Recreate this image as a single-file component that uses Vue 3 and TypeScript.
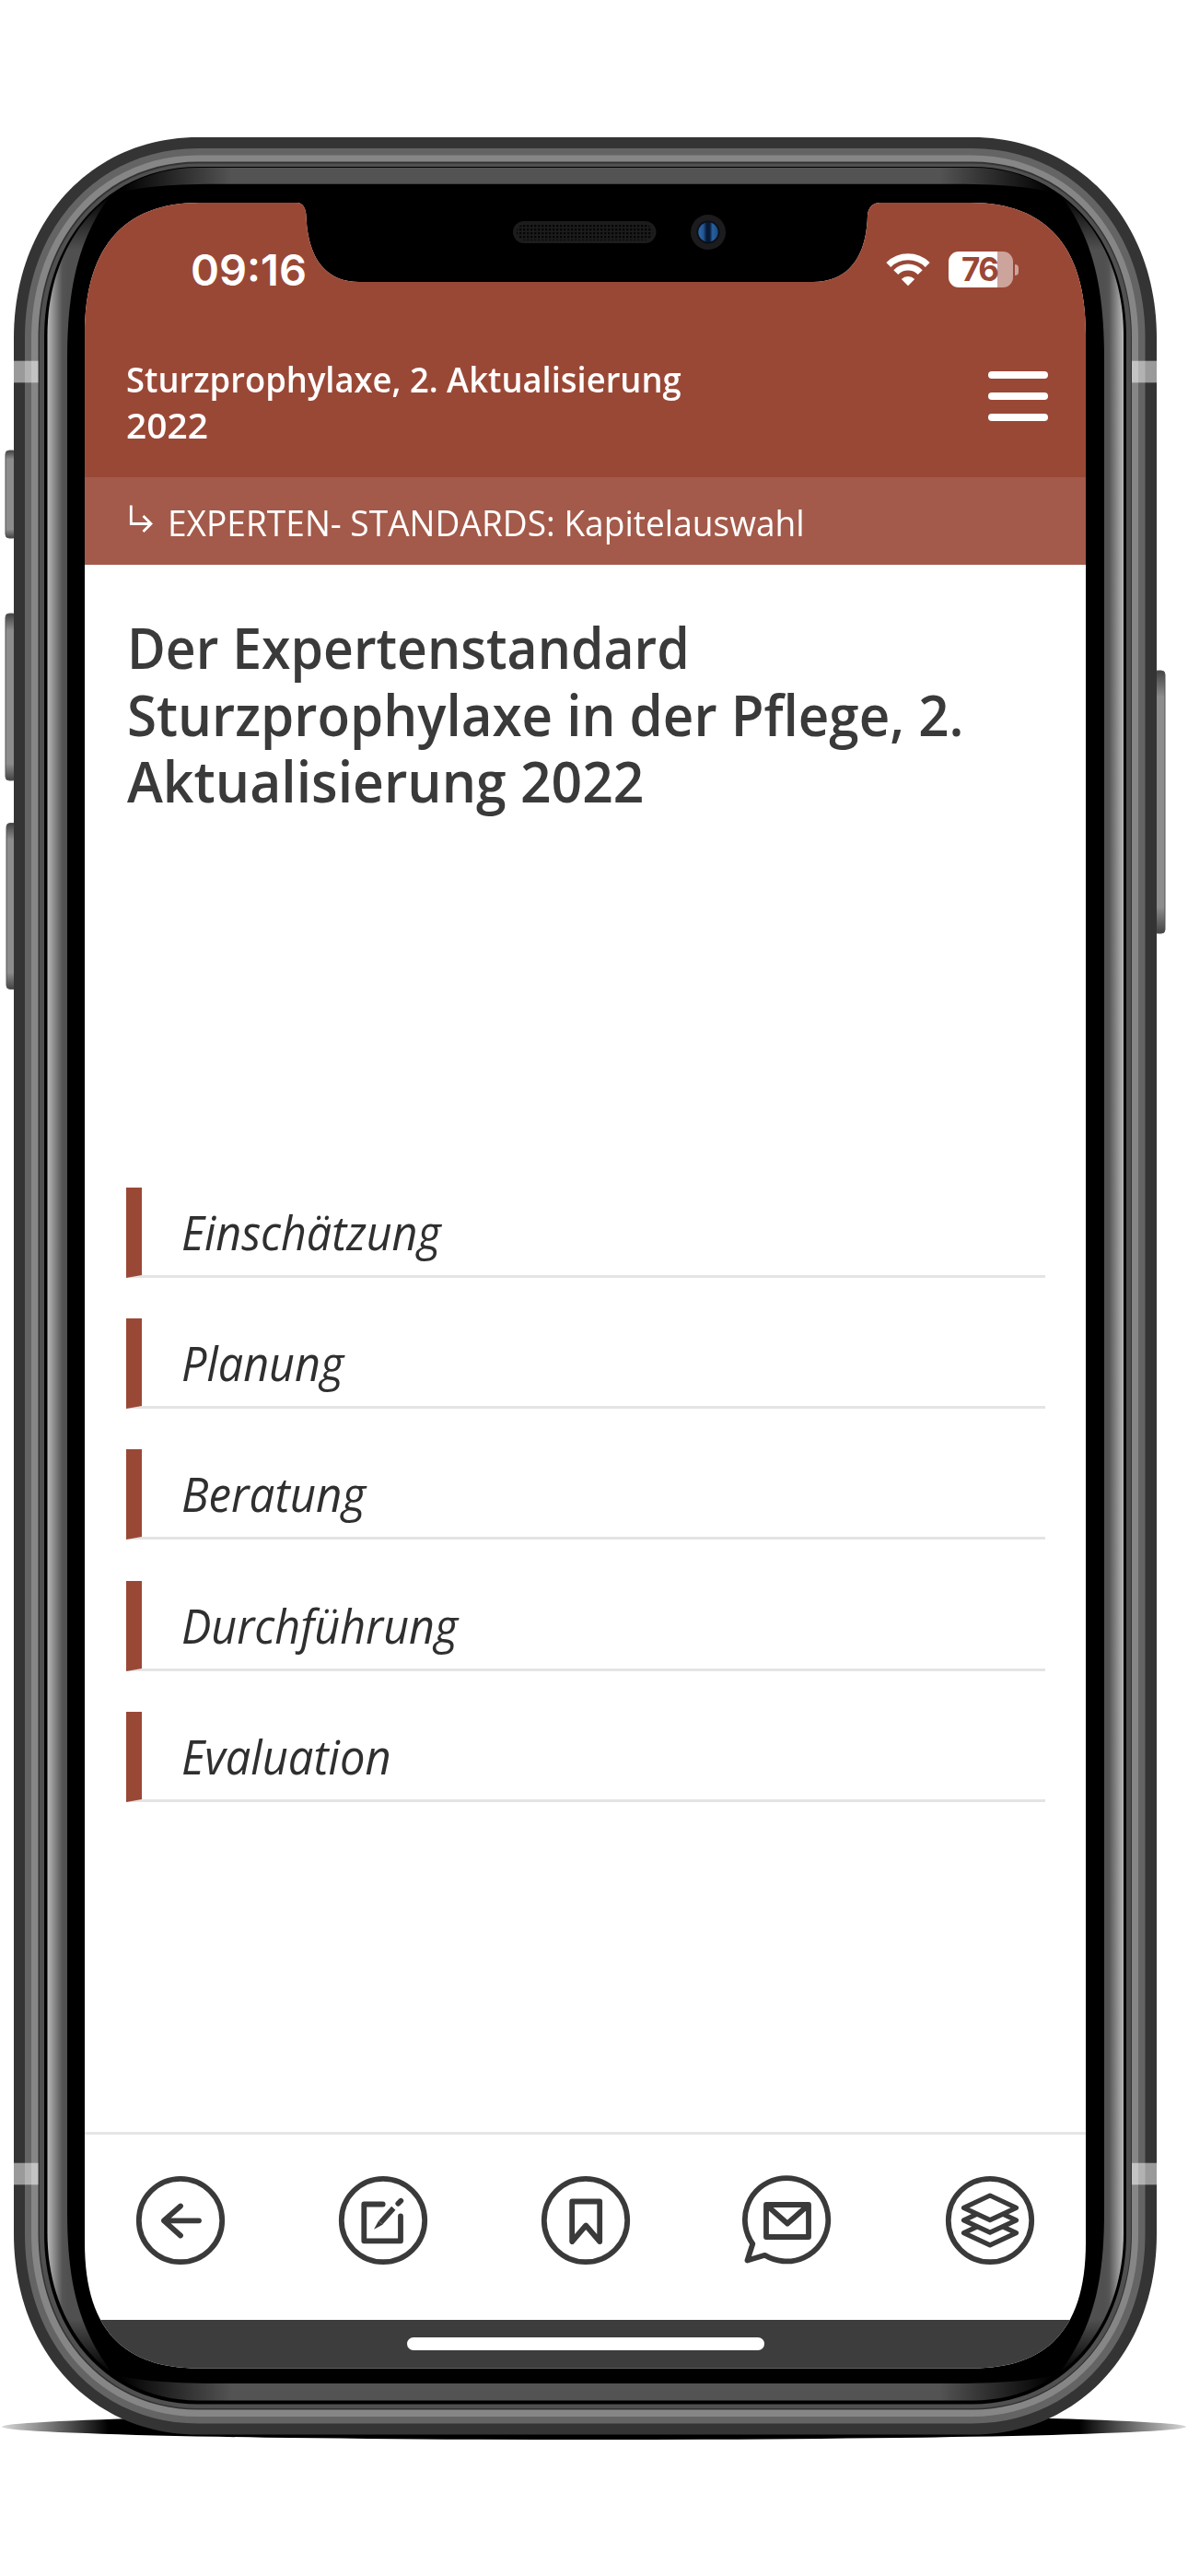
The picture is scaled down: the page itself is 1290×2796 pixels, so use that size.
<script setup lang="ts">
interface FittedLine {
  text: string
  width: number
}

const titleLines: FittedLine[] = [
  { text: 'Sturzprophylaxe, 2. Aktualisierung', width: 603 },
  { text: '2022', width: 89 },
]

const breadcrumb: FittedLine = { text: 'EXPERTEN- STANDARDS: Kapitelauswahl', width: 692 }

const headingLines: FittedLine[] = [
  { text: 'Der Expertenstandard', width: 611 },
  { text: 'Sturzprophylaxe in der Pflege, 2.', width: 908 },
  { text: 'Aktualisierung 2022', width: 561 },
]

const chapters: FittedLine[] = [
  { text: 'Einschätzung', width: 282 },
  { text: 'Planung', width: 176 },
  { text: 'Beratung', width: 200 },
  { text: 'Durchführung', width: 300 },
  { text: 'Evaluation', width: 228 },
]

// Condenses a line horizontally until it takes up the given width.
const vFit = {
  mounted(el: HTMLElement, binding: { value: number }) {
    el.style.transform = `scaleX(${binding.value / el.offsetWidth})`
  },
}

// Rounded rectangle with continuous corners, inset from the outer edge of the case.
function ring(x0: number, y0: number, x1: number, y1: number): string {
  const k = 0.42
  const rx = 200 - (x0 - 15)
  const ry = 218 - (x0 - 15)
  const a = rx * k
  const b = ry * k
  return [
    `M${x0} ${y0 + ry}`,
    `C${x0} ${y0 + b} ${x0 + a} ${y0} ${x0 + rx} ${y0}`,
    `H${x1 - rx}`,
    `C${x1 - a} ${y0} ${x1} ${y0 + b} ${x1} ${y0 + ry}`,
    `V${y1 - ry}`,
    `C${x1} ${y1 - b} ${x1 - a} ${y1} ${x1 - rx} ${y1}`,
    `H${x0 + rx}`,
    `C${x0 + a} ${y1} ${x0} ${y1 - b} ${x0} ${y1 - ry}`,
    'Z',
  ].join(' ')
}

const rings = [
  { d: ring(15, 149, 1256, 2642.5), fill: '#343434' },
  { d: ring(27, 161, 1243.5, 2630.5), fill: '#646464' },
  { d: ring(34, 168.5, 1236, 2623), fill: '#868686' },
  { d: ring(41.5, 175.5, 1229, 2615.5), fill: '#333333' },
  { d: ring(43, 177.5, 1228, 2614), fill: '#505050' },
  { d: ring(48, 181, 1223, 2609.5), fill: '#000000' },
]
const bezel = ring(51.5, 182, 1220, 2605.5)

const glass =
  'M73 390 C73 310 86 258 120 212 C140 204 180 199.7 235 199.7 H1037 C1092 199.7 1132 204 1152 212 ' +
  'C1186 258 1199 310 1199 390 V2400 C1199 2480 1186 2528 1150 2576 C1130 2583 1092 2587 1037 2587 ' +
  'H235 C180 2587 140 2583 122 2576 C86 2528 73 2480 73 2400 Z'

const sideButtons = [
  { x: 6, y: 489, w: 12, h: 95 },
  { x: 6, y: 666, w: 12, h: 181 },
  { x: 7, y: 893.5, w: 12, h: 180 },
  { x: 1253, y: 728, w: 12, h: 285 },
]
</script>

<template>
  <div class="stage">
    <svg class="case" viewBox="0 0 1290 2796" width="1290" height="2796" aria-hidden="true">
      <defs>
        <linearGradient id="floor">
          <stop offset="0" stop-color="#000" stop-opacity="0.15" />
          <stop offset="0.09" stop-color="#000" />
          <stop offset="0.91" stop-color="#000" />
          <stop offset="1" stop-color="#000" stop-opacity="0.15" />
        </linearGradient>
        <linearGradient id="edgeX" gradientUnits="userSpaceOnUse" x1="130" y1="0" x2="1142" y2="0">
          <stop offset="0" stop-color="#000" />
          <stop offset="0.12" stop-color="#535353" />
          <stop offset="0.88" stop-color="#535353" />
          <stop offset="1" stop-color="#000" />
        </linearGradient>
        <linearGradient id="edgeL" gradientUnits="userSpaceOnUse" x1="51.5" y1="0" x2="73" y2="0">
          <stop offset="0" stop-color="#b8b8b8" />
          <stop offset="0.75" stop-color="#555" />
          <stop offset="1" stop-color="#505050" />
        </linearGradient>
        <linearGradient id="edgeR" gradientUnits="userSpaceOnUse" x1="1220" y1="0" x2="1199" y2="0">
          <stop offset="0" stop-color="#b8b8b8" />
          <stop offset="0.75" stop-color="#555" />
          <stop offset="1" stop-color="#505050" />
        </linearGradient>
        <linearGradient id="fadeY" gradientUnits="userSpaceOnUse" x1="0" y1="212" x2="0" y2="2576">
          <stop offset="0" stop-color="#000" />
          <stop offset="0.025" stop-color="#fff" />
          <stop offset="0.975" stop-color="#fff" />
          <stop offset="1" stop-color="#000" />
        </linearGradient>
        <linearGradient id="button" x1="0" y1="0" x2="0" y2="1">
          <stop offset="0" stop-color="#444" />
          <stop offset="0.1" stop-color="#8d8d8d" />
          <stop offset="0.9" stop-color="#8d8d8d" />
          <stop offset="1" stop-color="#444" />
        </linearGradient>
        <mask id="sides" maskUnits="userSpaceOnUse" x="0" y="0" width="1290" height="2796">
          <rect x="0" y="212" width="1290" height="2364" fill="url(#fadeY)" />
        </mask>
        <clipPath id="bezelClip"><path :d="bezel" /></clipPath>
        <pattern id="mesh" width="4" height="4" patternUnits="userSpaceOnUse">
          <rect width="4" height="4" fill="#1c1c1d" />
          <rect width="2.4" height="2.4" fill="#060606" />
        </pattern>
        <linearGradient id="lens">
          <stop offset="0" stop-color="#2d69ad" />
          <stop offset="0.25" stop-color="#235795" />
          <stop offset="0.42" stop-color="#081933" />
          <stop offset="0.58" stop-color="#081933" />
          <stop offset="0.72" stop-color="#2860a0" />
          <stop offset="1" stop-color="#1d4a80" />
        </linearGradient>
      </defs>

      <ellipse cx="645" cy="2634" rx="643" ry="14" fill="url(#floor)" />

      <rect
        v-for="b in sideButtons"
        :key="b.y"
        :x="b.x"
        :y="b.y"
        :width="b.w"
        :height="b.h"
        rx="4"
        fill="url(#button)"
        stroke="#555"
        stroke-width="1"
      />
      <path v-for="r in rings" :key="r.d" :d="r.d" :fill="r.fill" />

      <g clip-path="url(#bezelClip)">
        <rect x="120" y="182" width="1032" height="31" fill="url(#edgeX)" />
        <rect x="120" y="2575" width="1032" height="31" fill="url(#edgeX)" />
        <g mask="url(#sides)">
          <rect x="51" y="212" width="71" height="2364" fill="url(#edgeL)" />
          <rect x="1150" y="212" width="71" height="2364" fill="url(#edgeR)" />
        </g>
        <path :d="glass" fill="#000" />
      </g>

      <g fill="#fff" fill-opacity="0.5">
        <rect x="15" y="391.7" width="26.5" height="23.6" />
        <rect x="1229" y="391.7" width="27" height="23.6" />
        <rect x="15" y="2347.7" width="26.5" height="23.6" />
        <rect x="1229" y="2347.7" width="27" height="23.6" />
      </g>

      <rect x="557" y="240" width="155.5" height="24" rx="12" fill="#1c1c1d" />
      <rect x="561" y="243" width="147.5" height="18" rx="9" fill="url(#mesh)" />
      <circle cx="769" cy="252" r="19" fill="#1c1c1e" />
      <circle cx="769" cy="252" r="12.5" fill="#0b0f18" />
      <circle cx="769" cy="252" r="10.7" fill="url(#lens)" />
    </svg>

    <div class="screen">
      <div class="status">
        <span class="time">09:16</span>
        <div class="indicators">
          <svg class="wifi" viewBox="0 0 48 36" width="48" height="36" aria-hidden="true">
            <g fill="none" stroke="#fff" stroke-width="7">
              <path d="M2.8 12.4 A30.2 30.2 0 0 1 45.2 12.4" />
              <path d="M10.8 20.6 A18.6 18.6 0 0 1 37.2 20.6" />
            </g>
            <path d="M24 35.3 L16.8 28 A10.2 10.2 0 0 1 31.2 28 Z" fill="#fff" />
          </svg>
          <div class="battery"><span class="level">76</span></div>
          <i class="nub"></i>
        </div>
      </div>

      <header class="header">
        <div class="title">
          <div v-for="line in titleLines" :key="line.text" class="line">
            <span v-fit="line.width" class="fit">{{ line.text }}</span>
          </div>
        </div>
        <div class="menu"><i></i><i></i><i></i></div>
      </header>

      <nav class="crumb">
        <svg viewBox="0 0 28 34" width="28" height="34" aria-hidden="true">
          <path d="M2.3 1.5 V21.5 H24 M15.5 13 L24 21.5 L15.5 30" fill="none" stroke="#fff" stroke-width="2.8" />
        </svg>
        <span v-fit="breadcrumb.width" class="fit">{{ breadcrumb.text }}</span>
      </nav>

      <main class="content">
        <h1 class="heading">
          <span v-for="line in headingLines" :key="line.text" class="line">
            <span v-fit="line.width" class="fit">{{ line.text }}</span>
          </span>
        </h1>
        <ul class="chapters">
          <li v-for="chapter in chapters" :key="chapter.text" class="chapter">
            <span v-fit="chapter.width" class="fit">{{ chapter.text }}</span>
          </li>
        </ul>
      </main>

      <footer class="tabs">
        <svg class="icon" viewBox="0 0 100 100" aria-hidden="true">
          <circle cx="50" cy="50" r="45.2" />
          <path d="M70 50.3 H32 M50 34.5 L32 50.3 L50 66.5" />
        </svg>
        <svg class="icon" viewBox="0 0 100 100" aria-hidden="true">
          <circle cx="50" cy="50" r="45.2" />
          <path d="M49.7 32.5 H29.3 V72.3 H69 V45.5" />
          <path d="M61.3 36.8 L47.5 52.2" stroke-linecap="butt" />
          <path d="M66.3 31.8 L69.3 28.8" />
          <path d="M45.2 50.2 L49.8 54.5 L40 59.8 Z" class="tip" />
        </svg>
        <svg class="icon" viewBox="0 0 100 100" aria-hidden="true">
          <circle cx="50" cy="50" r="45.2" />
          <path d="M35.2 29.5 H65.2 V73 L50.2 55.5 L35.2 73 Z" />
        </svg>
        <svg class="icon" viewBox="0 0 100 100" aria-hidden="true">
          <path d="M25.5 87.8 A45.2 45.2 0 1 0 12.3 75.5 L6.5 93.5 Z" />
          <path d="M27 33 H73 V68 H27 Z M28 34 L50 53.5 L72 34" />
        </svg>
        <svg class="icon layers" viewBox="0 0 100 100" aria-hidden="true">
          <circle cx="50" cy="50" r="45.2" />
          <path d="M50 50.3 L78.5 63.6 L50 76.9 L21.5 63.6 Z" />
          <path d="M50 36.6 L78.5 49.9 L50 63.2 L21.5 49.9 Z" />
          <path d="M50 23 L78.5 36.3 L50 49.6 L21.5 36.3 Z" />
        </svg>
      </footer>

      <div class="home"><i></i></div>
    </div>
  </div>
</template>

<style>
body {
  background: #fff;
}
</style>

<style scoped>
.stage {
  position: relative;
  box-sizing: border-box;
  width: 1290px;
  height: 2796px;
  padding: 220px 0 0 92px;
  overflow: hidden;
  font-family: "Open Sans", "Noto Sans", sans-serif;
}

.case {
  position: absolute;
  inset: 0;
}

.screen {
  position: relative;
  display: flex;
  flex-direction: column;
  width: 1087px;
  height: 2350.5px;
  background: #fff;
  color: #3a3a3a;
  clip-path: path("M0 143 C0 52 39 0 125 0 H230 C237 0 240 6 240.5 14 C242 58 260 86 298 86 H791 C831 86 849 56 850 14 C850.5 6 855 0 864 0 H962 C1048 0 1087 52 1087 143 V2214 C1087 2304 1049 2350.5 964 2350.5 H123 C38 2350.5 0 2304 0 2214 Z");
}

.status {
  display: flex;
  justify-content: space-between;
  box-sizing: border-box;
  height: 140px;
  padding: 48px 73px 0 115px;
  background: #9a4836;
  color: #fff;
  font-family: Inter, sans-serif;
}

.time {
  font-size: 47px;
  font-weight: 600;
  line-height: 50px;
}

.indicators {
  display: flex;
  align-items: flex-start;
}

.wifi {
  margin: 7px 19.5px 0 0;
}

.battery {
  width: 70.5px;
  height: 38.5px;
  margin-top: 5px;
  border-radius: 11px;
  background: linear-gradient(90deg, #fff 53.5px, #cca49b 53.5px);
  color: #9a4836;
  text-align: center;
}

.level {
  display: block;
  padding-right: 2px;
  font-size: 35px;
  font-weight: 700;
  line-height: 39px;
  letter-spacing: -1.5px;
}

.nub {
  width: 4px;
  height: 12px;
  margin: 18.5px 0 0 2px;
  border-radius: 0 4px 4px 0;
  background: #cca49b;
}

.header {
  display: flex;
  justify-content: space-between;
  box-sizing: border-box;
  height: 158px;
  padding: 26px 41px 0 45px;
  background: #9a4836;
  color: #fff;
}

.title {
  font-size: 38px;
  font-weight: 560;
  line-height: 50px;
}

.line {
  display: block;
  white-space: nowrap;
}

.fit {
  display: inline-block;
  transform-origin: left center;
  white-space: nowrap;
}

.menu {
  display: flex;
  flex-direction: column;
  gap: 14.6px;
  padding-top: 17px;
}

.menu i {
  width: 65.5px;
  height: 8.2px;
  border-radius: 5px;
  background: #fff;
}

.crumb {
  display: flex;
  align-items: center;
  gap: 14px;
  box-sizing: border-box;
  height: 95px;
  padding: 3px 0 0 47.5px;
  background: #a35a4a;
  color: #fff;
  font-size: 38px;
  font-weight: 400;
}

.crumb svg {
  flex: none;
  margin-top: -6px;
}

.content {
  flex: 1;
  padding: 54px 44px 0 46px;
}

.heading {
  margin: 0 0 403.5px;
  font-size: 61px;
  font-weight: 560;
  line-height: 72.7px;
}

.chapters {
  display: flex;
  flex-direction: column;
  gap: 44.4px;
  margin: 0 0 0 -1px;
  padding: 0;
  list-style: none;
}

.chapter {
  box-sizing: border-box;
  height: 98px;
  padding-left: 42.5px;
  border-left: 17px solid #9a4836;
  border-bottom: 3px solid #e4e4e4;
  color: #2f2f2f;
  font-size: 51px;
  font-style: italic;
  font-weight: 400;
  line-height: 97px;
}

.tabs {
  display: flex;
  justify-content: space-between;
  box-sizing: border-box;
  height: 204px;
  padding: 43.5px 54px 0;
  border-top: 3px solid #e6e6e6;
}

.icon {
  width: 100px;
  height: 100px;
  fill: none;
  stroke: #3a3a3a;
  stroke-width: 5.8;
  stroke-linecap: round;
  stroke-linejoin: round;
}

.icon .tip {
  fill: #3a3a3a;
  stroke: none;
}

.layers path {
  fill: #fff;
  stroke-width: 5.2;
}

.home {
  display: flex;
  justify-content: center;
  height: 53px;
  background: #3d3d3d;
}

.home i {
  width: 388px;
  height: 14px;
  margin-top: 19px;
  border-radius: 7px;
  background: #fff;
}
</style>
